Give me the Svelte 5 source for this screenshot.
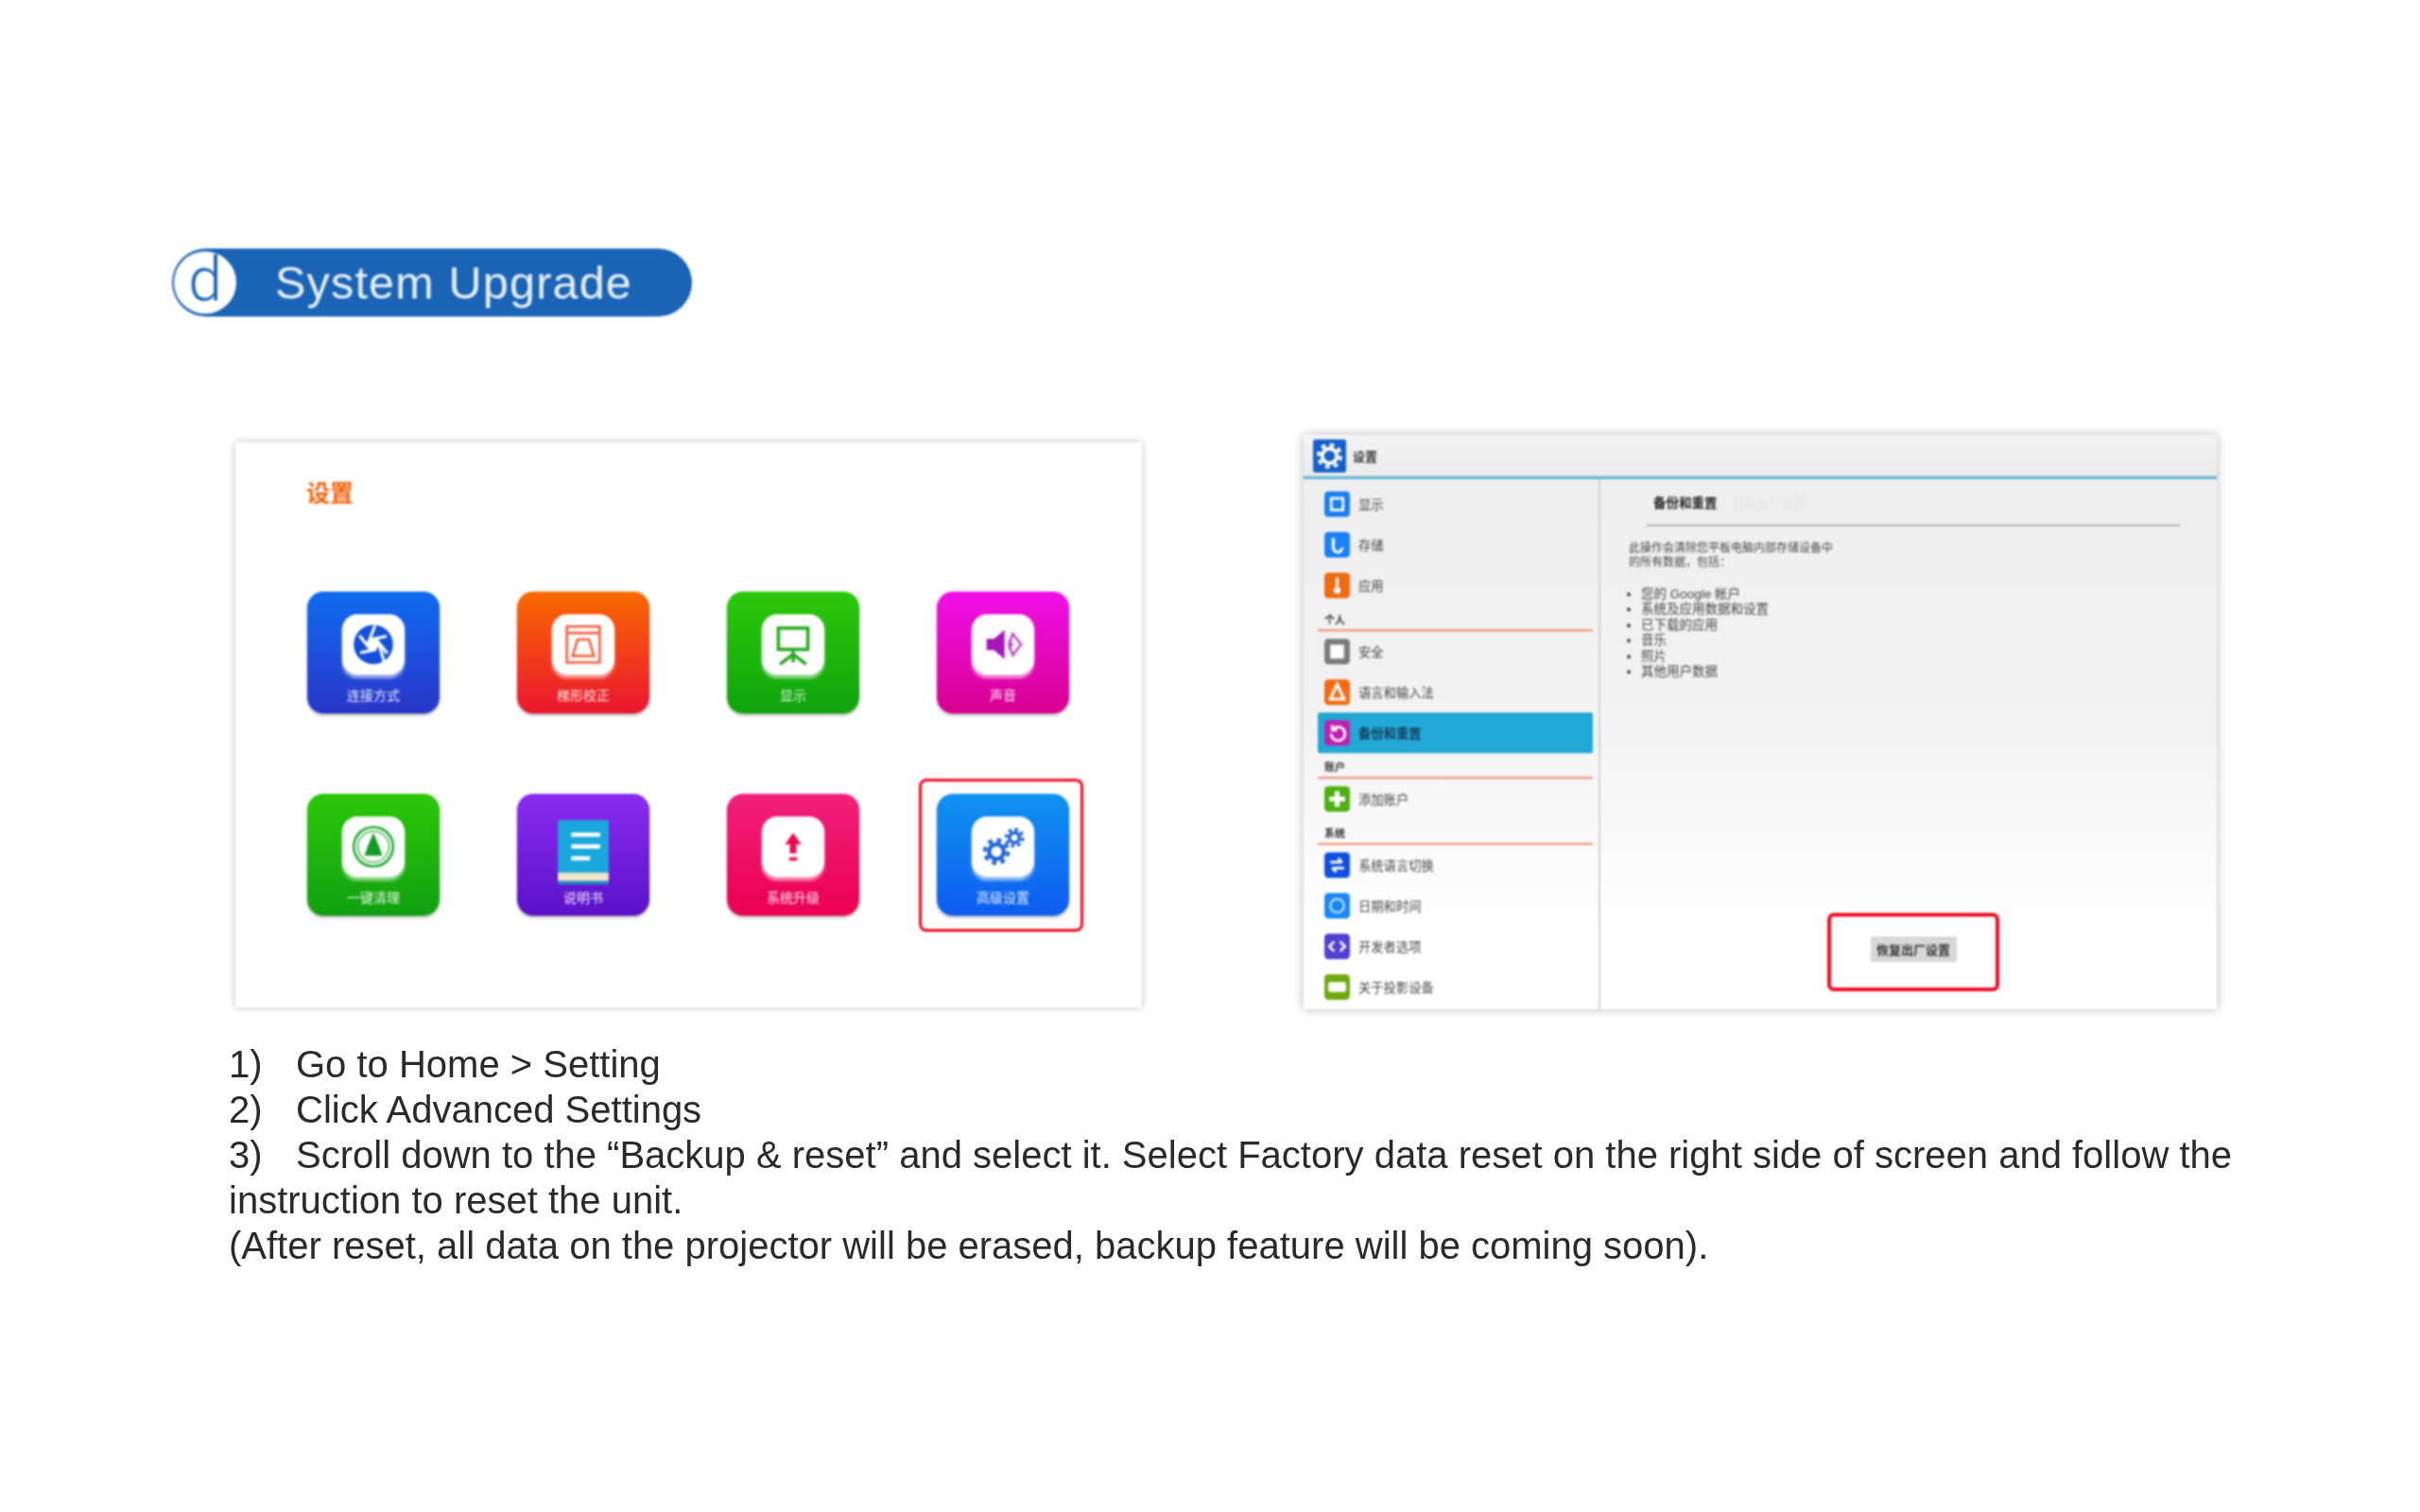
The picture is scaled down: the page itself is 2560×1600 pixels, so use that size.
<script>
	const tiles = [
		{ label: '连接方式', icon: 'aperture', bg: 'linear-gradient(180deg,#0f6cf0,#2a35c8)' },
		{ label: '梯形校正', icon: 'keystone', bg: 'linear-gradient(180deg,#f86a00,#ea1530)' },
		{ label: '显示', icon: 'board', bg: 'linear-gradient(180deg,#2cc80a,#0fa40e)' },
		{ label: '声音', icon: 'speaker', bg: 'linear-gradient(180deg,#f010e8,#d80090)' },
		{ label: '一键清理', icon: 'clean', bg: 'linear-gradient(180deg,#2cc80a,#10a010)' },
		{ label: '说明书', icon: 'book', bg: 'linear-gradient(180deg,#8a2cf0,#5a12c8)' },
		{ label: '系统升级', icon: 'upgrade', bg: 'linear-gradient(180deg,#f0207a,#ec0050)' },
		{ label: '高级设置', icon: 'gears', bg: 'linear-gradient(180deg,#1092f0,#0e5cf0)', marked: true }
	];

	const side = [
		{ name: '显示', color: '#1a7ff0', glyph: 'display' },
		{ name: '存储', color: '#1a80f5', glyph: 'storage' },
		{ name: '应用', color: '#f06a10', glyph: 'app' },
		{ head: '个人' },
		{ name: '安全', color: '#7c7c7c', glyph: 'lock' },
		{ name: '语言和输入法', color: '#f56a10', glyph: 'lang' },
		{ name: '备份和重置', color: '#c020b0', glyph: 'reset', active: true },
		{ head: '账户' },
		{ name: '添加账户', color: '#50b010', glyph: 'plus' },
		{ head: '系统' },
		{ name: '系统语言切换', color: '#1050e0', glyph: 'swap' },
		{ name: '日期和时间', color: '#1a88f5', glyph: 'clock' },
		{ name: '开发者选项', color: '#5040d0', glyph: 'code' },
		{ name: '关于投影设备', color: '#70a810', glyph: 'about' }
	];

	const wiped = ['您的 Google 帐户', '系统及应用数据和设置', '已下载的应用', '音乐', '照片', '其他用户数据'];
</script>

<main class="page">
	<h1 class="pill">
		<span class="letter">d</span>
		<span class="pill-text">System Upgrade</span>
	</h1>

	<section class="shots">
		<div class="launcher">
			<div class="launcher-title">设置</div>
			<div class="tiles">
				{#each tiles as t}
					<div class="tile" class:marked={t.marked} style="background:{t.bg}">
						{#if t.icon === 'book'}
							<svg class="book" viewBox="0 0 60 76">
								<rect x="0" y="0" width="60" height="66" fill="#1aa8dc" />
								<rect x="0" y="62" width="60" height="10" fill="#f2e6c8" />
								<rect x="0" y="72" width="60" height="4" fill="#1a8fc0" />
								<path d="M16 17h34M16 31h34M16 45h22" stroke="#fff" stroke-width="5" />
							</svg>
						{:else}
							<div class="plate">
								<svg viewBox="0 0 60 60">
									{#if t.icon === 'aperture'}
										<circle cx="30" cy="30" r="24" fill="#1450d8" />
										<g fill="none" stroke="#fff" stroke-width="3.500">
											<path d="M37 30L43 51M33.500 36L14 40M26.500 36L13 19M23 30L32 7M26.500 24L46 20M33.500 24L47 41" />
										</g>
										<path d="M37 30l-3.500 6h-7L23 30l3.500-6h7z" fill="#fff" />
									{:else if t.icon === 'keystone'}
										<g fill="none" stroke="#f0603c" stroke-width="3">
											<rect x="10" y="8" width="40" height="44" />
											<path d="M10 16h40M23 24h14l6 20H17z" />
										</g>
									{:else if t.icon === 'board'}
										<g fill="none" stroke="#22a818" stroke-width="4">
											<rect x="12" y="10" width="36" height="26" />
											<path d="M30 36v6M30 42L14 54M30 42l16 12M30 42v10" />
										</g>
									{:else if t.icon === 'speaker'}
										<path d="M10 23h9l13-11v36L19 37h-9z" fill="#a818b8" />
										<path d="M42 17l10 13-10 13-5-13zM37 24l4 6-4 6" fill="none" stroke="#c050d0" stroke-width="3" />
									{:else if t.icon === 'clean'}
										<circle cx="30" cy="30" r="24" fill="none" stroke="#22a830" stroke-width="3" />
										<circle cx="30" cy="30" r="19" fill="none" stroke="#22a830" stroke-width="1.500" />
										<path d="M30 13l6 14 5 14H19l5-14z" fill="#149a28" />
									{:else if t.icon === 'upgrade'}
										<path d="M30 13l10 14h-6v11h-8V27h-6z" fill="#ec0a50" />
										<rect x="25" y="43" width="10" height="4" fill="#ec0a50" />
									{:else if t.icon === 'gears'}
										<g fill="none" stroke="#1c62d8">
											<circle cx="22" cy="36" r="9" stroke-width="5" />
											<circle cx="22" cy="36" r="14" stroke-width="5" stroke-dasharray="5.500 5.500" />
											<circle cx="44" cy="19" r="6" stroke-width="4" />
											<circle cx="44" cy="19" r="10" stroke-width="4" stroke-dasharray="4 3.850" />
										</g>
									{/if}
								</svg>
							</div>
						{/if}
						<span class="tile-label">{t.label}</span>
					</div>
				{/each}
			</div>
		</div>

		<div class="window">
			<div class="titlebar">
				<svg class="app-gear" viewBox="0 0 36 36">
					<rect width="36" height="36" rx="3" fill="#1560c8" />
					<circle cx="18" cy="18" r="8" fill="none" stroke="#fff" stroke-width="4" />
					<circle cx="18" cy="18" r="12" fill="none" stroke="#fff" stroke-width="4" stroke-dasharray="4.700 4.700" />
				</svg>
				<span>设置</span>
			</div>
			<div class="panes">
				<nav class="sidebar">
					{#each side as s}
						{#if s.head}
							<div class="side-head">{s.head}</div>
						{:else}
							<div class="side-row" class:active={s.active}>
								<svg class="side-icon" viewBox="0 0 26 26">
									<rect width="26" height="26" rx="4" fill={s.color} />
									{#if s.glyph === 'display'}
										<rect x="7" y="7" width="12" height="12" fill="none" stroke="#fff" stroke-width="2.500" />
									{:else if s.glyph === 'storage'}
										<path d="M9 6v10a4.500 4.500 0 0 0 9 0" fill="none" stroke="#fff" stroke-width="3" />
									{:else if s.glyph === 'app'}
										<path d="M13 5v9" stroke="#fff" stroke-width="3" /><circle cx="13" cy="18" r="3.500" fill="#fff" />
									{:else if s.glyph === 'lock'}
										<rect x="6" y="6" width="14" height="14" fill="#fff" />
									{:else if s.glyph === 'lang'}
										<path d="M13 5l7 15H6z" fill="none" stroke="#fff" stroke-width="3" />
									{:else if s.glyph === 'reset'}
										<path d="M9 9a7 7 0 1 1-2 5M8 5v5h5" fill="none" stroke="#fff" stroke-width="2.500" />
									{:else if s.glyph === 'plus'}
										<path d="M13 5v16M5 13h16" stroke="#fff" stroke-width="5" />
									{:else if s.glyph === 'swap'}
										<path d="M6 10h12M14 6l4 4M20 16H8M12 20l-4-4" fill="none" stroke="#fff" stroke-width="2.500" />
									{:else if s.glyph === 'clock'}
										<circle cx="13" cy="13" r="7" fill="none" stroke="#cfe6ff" stroke-width="2" />
									{:else if s.glyph === 'code'}
										<path d="M10 8l-5 5 5 5M16 8l5 5-5 5" fill="none" stroke="#fff" stroke-width="2.500" />
									{:else}
										<rect x="4" y="8" width="18" height="10" rx="2" fill="#fff" />
									{/if}
								</svg>
								<span>{s.name}</span>
							</div>
						{/if}
					{/each}
				</nav>
				<div class="detail">
					<div class="detail-head"><b>备份和重置</b><span>恢复出厂设置</span></div>
					<p>此操作会清除您平板电脑内部存储设备中的所有数据，包括：</p>
					<ul>
						{#each wiped as w}<li>{w}</li>{/each}
					</ul>
					<div class="reset-mark"><button>恢复出厂设置</button></div>
				</div>
			</div>
		</div>
	</section>

	<section class="steps">
		<div class="step"><span class="num">1)</span>Go to Home &gt; Setting</div>
		<div class="step"><span class="num">2)</span>Click Advanced Settings</div>
		<div class="step just"><span class="num">3)</span>Scroll down to the “Backup &amp; reset” and select it. Select Factory data reset on the right side of screen and follow the instruction to reset the unit.</div>
		<div class="step">(After reset, all data on the projector will be erased, backup feature will be coming soon).</div>
	</section>
</main>

<style>
	:global(body) { background: #fff; }
	.page {
		width: 2560px; height: 1600px; box-sizing: border-box;
		padding: 263px 0 0 182px; overflow: hidden;
		font-family: "Liberation Sans", "Noto Sans CJK SC", sans-serif;
	}

	.pill {
		display: flex; align-items: center; margin: 0;
		width: 550px; height: 72px; border-radius: 36px;
		background: #1a63b5; font-weight: 400; filter: blur(0.8px);
	}
	.letter {
		width: 66px; height: 66px; margin-left: 2px; border-radius: 50%;
		background: #fff; color: #1a63b5;
		display: flex; align-items: center; justify-content: center;
		font-family: Roboto, "Liberation Sans", sans-serif; font-weight: 300;
		font-size: 64px; line-height: 1; padding-bottom: 4px; box-sizing: border-box;
	}
	.pill-text { margin-left: 41px; color: #e8f0fa; font-size: 48.500px; letter-spacing: 1.200px; }

	.shots { display: flex; align-items: flex-start; margin: 125px 0 0 67px; }

	.launcher {
		width: 959px; height: 598px; margin-top: 8px; box-sizing: border-box;
		padding: 41px 0 0 75px; background: #fff;
		box-shadow: 0 0 7px rgba(0,0,0,0.28); filter: blur(0.9px);
	}
	.launcher-title { color: #f5620c; font-size: 25px; font-weight: 700; line-height: 27px; }
	.tiles {
		display: grid; grid-template-columns: repeat(4, 140px);
		column-gap: 82px; row-gap: 85px; margin: 90px 0 0 1px;
	}
	.tile {
		position: relative; height: 129px; border-radius: 17px;
		display: flex; flex-direction: column; align-items: center;
		box-shadow: 0 2px 3px rgba(0,0,0,0.3);
	}
	.tile.marked::after {
		content: ''; position: absolute; inset: -16px -15px -17px -19px;
		border: 3px solid #f00a1e; border-radius: 8px;
	}
	.plate {
		width: 66px; height: 64px; margin-top: 24px; border-radius: 16px;
		background: #fff; box-shadow: 0 4px 3px rgba(255,255,255,0.55);
		display: flex; align-items: center; justify-content: center;
	}
	.plate svg { width: 52px; height: 52px; }
	.book { width: 58px; height: 68px; margin-top: 28px; margin-bottom: -8px; }
	.tile-label {
		margin-top: auto; margin-bottom: 10px;
		color: #fff; font-size: 14px; line-height: 18px; opacity: 0.9;
	}

	.window {
		width: 966px; height: 608px; margin-left: 171px; display: flex; flex-direction: column;
		background: #fff; box-shadow: 0 0 10px rgba(0,0,0,0.28); filter: blur(1px);
	}
	.titlebar {
		height: 44px; flex: none; display: flex; align-items: center; gap: 7px;
		padding-left: 10px; background: linear-gradient(180deg, #f4f4f4, #ebebeb);
		border-bottom: 3px solid #5ab2d2;
		font-size: 13px; font-weight: 700; color: #333;
	}
	.app-gear { width: 35px; height: 35px; }
	.panes {
		flex: 1; display: flex; min-height: 0;
		background: linear-gradient(180deg, #efefef 0%, #f3f3f3 45%, #fff 85%);
	}
	.sidebar { width: 314px; flex: none; padding: 5px 6px 0 15px; box-sizing: border-box; border-right: 2px solid #d4d4d4; }
	.side-row {
		height: 43px; display: flex; align-items: center; gap: 9px; padding-left: 7px;
		font-size: 13.300px; color: #444; border-radius: 2px;
	}
	.side-row.active { background: #22a8d4; color: #153a5a; font-weight: 700; }
	.side-icon { width: 27px; height: 27px; flex: none; }
	.side-head {
		height: 25px; line-height: 30px; padding-left: 7px; margin-bottom: 0;
		font-size: 11px; font-weight: 700; color: #333; border-bottom: 2px solid #f58a70;
	}
	.detail { flex: 1; position: relative; padding: 12px 0 0 30px; color: #444; font-size: 12px; }
	.detail-head {
		width: 564px; height: 38px; margin-left: 19px; padding-left: 7px; box-sizing: border-box;
		border-bottom: 2px solid #b5b5b5; font-size: 13.500px; line-height: 28px; color: #222;
	}
	.detail-head span { margin-left: 16px; color: #e2e2e2; font-size: 13px; }
	.detail p { width: 220px; margin: 16px 0 0; line-height: 15px; color: #444; }
	.detail ul { margin: 18px 0 0; padding: 0 0 0 13px; font-size: 13.500px; line-height: 16.400px; }
	.reset-mark {
		position: absolute; left: 240px; top: 459px; width: 182px; height: 83px; box-sizing: border-box;
		border: 4px solid #f00a1e; border-radius: 7px; padding-bottom: 6px;
		display: flex; align-items: center; justify-content: center;
	}
	.reset-mark button {
		width: 91px; height: 27px; padding: 0; border: 0; background: #d8d8d8;
		font: 700 13px "Liberation Sans", "Noto Sans CJK SC", sans-serif; color: #333;
	}

	.steps {
		width: 2119px; margin: 34px 0 0 60px; color: #2a2a2a;
		font-size: 40px; line-height: 48px; filter: blur(0.6px);
	}
	.num { display: inline-block; width: 71px; }
	.just { text-align: justify; }
</style>
